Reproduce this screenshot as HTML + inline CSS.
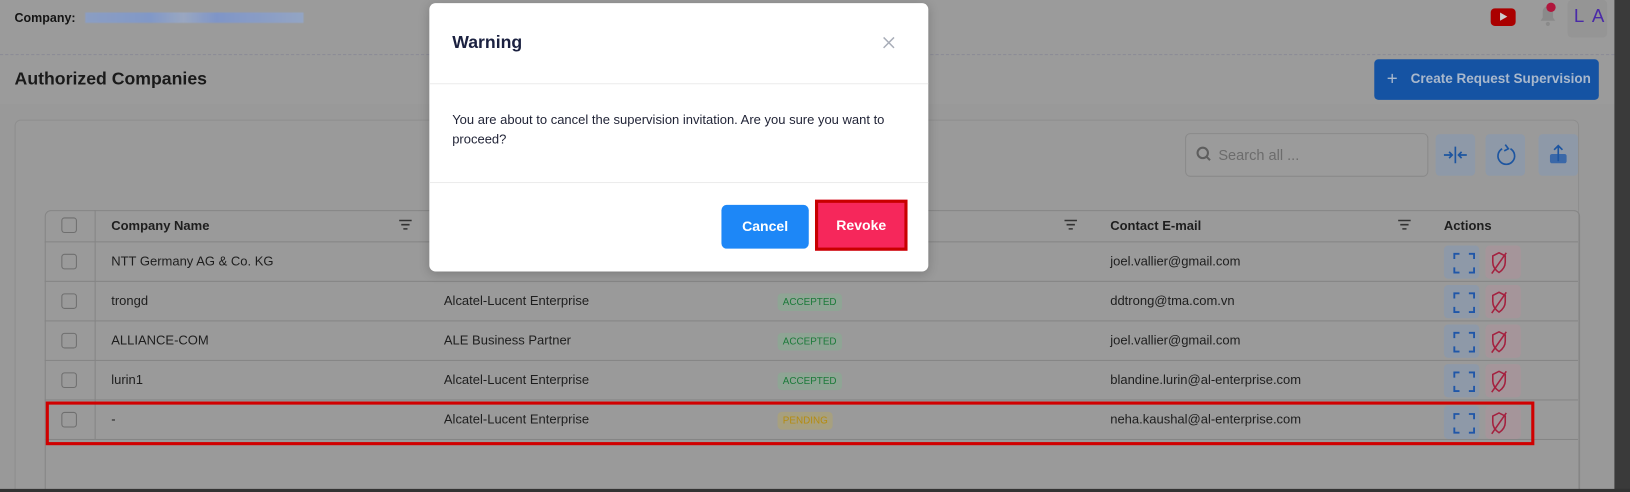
<!DOCTYPE html>
<html><head><meta charset="utf-8">
<style>
html,body{margin:0;padding:0;width:1630px;height:492px;overflow:hidden;background:#979797;font-family:"Liberation Sans",Arial,sans-serif;}
#w{position:absolute;left:0;top:0;width:1568px;height:473px;transform:scale(1.03954,1.0402);transform-origin:0 0;background:#999;overflow:hidden;}
.a{position:absolute;}
.t{position:absolute;font-size:12.5px;color:#1e1e1e;white-space:nowrap;}
.cb{position:absolute;width:13px;height:13px;border:1px solid #6f6f6f;border-radius:3px;left:59px;}
.badge{position:absolute;font-size:9.5px;padding:3px 5px;border-radius:4px;left:748px;}
.acc{background:#8fa595;color:#1c7a3a;}
.pen{background:#a7a07f;color:#b58c10;}
.ib{position:absolute;width:34px;height:32px;border-radius:4px;}
.blue{background:#8e99a8;left:1389px;}
.red{background:#a5959a;left:1429px;}
.hl{position:absolute;left:43px;right:0;height:1px;background:#858585;}
</style></head><body>
<div id="w">
 <div class="a" style="left:0;top:0;width:1553px;height:100px;background:#9b9b9b;"></div>
 <div class="a" style="left:0;top:52px;width:1553px;border-top:1px dashed #8a8a95;"></div>
 <div class="t" style="left:14px;top:10px;font-weight:bold;font-size:12px;color:#141414;">Company:</div>
 <div class="a" style="left:82px;top:12px;width:210px;height:10px;background:linear-gradient(90deg,#8a9fc8 0,#7f98cc 30%,#9aa9c6 45%,#7d95cc 60%,#93a6c9 100%);filter:blur(0.6px);opacity:.9"></div>
 <div class="a" style="left:1434px;top:8px;width:24px;height:17px;background:#a00;border-radius:4px;"></div>
 <div class="a" style="left:1443px;top:12px;width:0;height:0;border-left:7px solid #ccc;border-top:4.5px solid transparent;border-bottom:4.5px solid transparent;"></div>
 <svg class="a" style="left:1478px;top:2px" width="22" height="24"><path d="M4 18h14l-2-3v-6a5 5 0 0 0-10 0v6z" fill="#8a8a8a"/><circle cx="11" cy="21" r="2" fill="#8a8a8a"/><circle cx="14" cy="5" r="4.5" fill="#b0163c"/></svg>
 <div class="a" style="left:1508px;top:0;width:38px;height:36px;background:#959595;border-radius:4px;"></div>
 <div class="t" style="left:1514px;top:5px;font-size:18px;color:#4a2aa8;letter-spacing:2px;">L A</div>
 <div class="t" style="left:14px;top:66px;font-size:17px;font-weight:bold;color:#1a1a1a;">Authorized Companies</div>
 <div class="a" style="left:1322px;top:57px;width:216px;height:39px;background:#1553a3;border-radius:4px;"></div>
 <div class="t" style="left:1334px;top:65px;font-size:18px;color:#a9b8cc;">+</div>
 <div class="t" style="left:1357px;top:68px;font-size:13px;font-weight:bold;color:#a9b8cc;">Create Request Supervision</div>
 <div class="a" style="left:14px;top:115px;width:1503px;height:360px;background:#9a9a9a;border:1px solid #8e8e8e;border-radius:6px;"></div>
 <div class="a" style="left:1140px;top:128px;width:232px;height:40px;border:1px solid #8a8a8a;border-radius:5px;background:#9b9b9b;"></div>
 <svg class="a" style="left:1150px;top:140px" width="16" height="16"><circle cx="7" cy="7" r="5" stroke="#5e5e5e" stroke-width="2" fill="none"/><path d="M11 11l3 3" stroke="#5e5e5e" stroke-width="2"/></svg>
 <div class="t" style="left:1172px;top:141px;font-size:14px;color:#6c6c6c;">Search all ...</div>
 <div class="a" style="left:1381px;top:129px;width:38px;height:40px;background:#8e99a8;border-radius:4px;"></div>
 <div class="a" style="left:1429px;top:129px;width:38px;height:40px;background:#8e99a8;border-radius:4px;"></div>
 <div class="a" style="left:1480px;top:129px;width:38px;height:40px;background:#8e99a8;border-radius:4px;"></div>
 <svg class="a" style="left:1381px;top:129px" width="38" height="40"><g stroke="#1d55a0" stroke-width="1.6" fill="none"><path d="M19 12v16M8 20h8M13 17l3 3-3 3M30 20h-8M25 17l-3 3 3 3"/></g></svg>
 <svg class="a" style="left:1429px;top:129px" width="38" height="40"><g stroke="#1d55a0" stroke-width="1.6" fill="none"><path d="M24 14a8 8 0 1 1-8 0"/><path d="M19 10l3 4-4 2"/></g></svg>
 <svg class="a" style="left:1480px;top:129px" width="38" height="40"><rect x="11" y="19" width="16" height="9" rx="2" fill="#3a68a8"/><path d="M19 26V11M15 15l4-4 4 4" stroke="#1d55a0" stroke-width="1.6" fill="none"/></svg>
 <div class="a" style="left:43px;top:202px;width:1475px;height:280px;border:1px solid #858585;border-radius:6px;"></div>
 <div class="a" style="left:91px;top:202px;width:1px;height:220px;background:#858585;"></div>
 <div class="hl" style="top:232px;width:1475px"></div>
 <div class="hl" style="top:270px;width:1475px"></div>
 <div class="hl" style="top:308px;width:1475px"></div>
 <div class="hl" style="top:346px;width:1475px"></div>
 <div class="hl" style="top:384px;width:1475px"></div>
 <div class="hl" style="top:422px;width:1475px"></div>
 <div class="cb" style="top:209px"></div>
 <div class="t" style="left:107px;top:210px;font-weight:bold;">Company Name</div>
 <div class="t" style="left:1068px;top:210px;font-weight:bold;">Contact E-mail</div>
 <div class="t" style="left:1389px;top:210px;font-weight:bold;">Actions</div>
 <svg class="a" style="left:383px;top:210px" width="14" height="12"><path d="M1 2h12M3 6h8M5 10h4" stroke="#333" stroke-width="1.5"/></svg>
 <svg class="a" style="left:1023px;top:210px" width="14" height="12"><path d="M1 2h12M3 6h8M5 10h4" stroke="#333" stroke-width="1.5"/></svg>
 <svg class="a" style="left:1344px;top:210px" width="14" height="12"><path d="M1 2h12M3 6h8M5 10h4" stroke="#333" stroke-width="1.5"/></svg>

 <div class="cb" style="top:244px"></div><div class="t" style="left:107px;top:244px">NTT Germany AG &amp; Co. KG</div>
 <div class="t" style="left:1068px;top:244px">joel.vallier@gmail.com</div>
 <div class="cb" style="top:282px"></div><div class="t" style="left:107px;top:282px">trongd</div>
 <div class="t" style="left:427px;top:282px">Alcatel-Lucent Enterprise</div>
 <div class="badge acc" style="top:282px">ACCEPTED</div>
 <div class="t" style="left:1068px;top:282px">ddtrong@tma.com.vn</div>
 <div class="cb" style="top:320px"></div><div class="t" style="left:107px;top:320px">ALLIANCE-COM</div>
 <div class="t" style="left:427px;top:320px">ALE Business Partner</div>
 <div class="badge acc" style="top:320px">ACCEPTED</div>
 <div class="t" style="left:1068px;top:320px">joel.vallier@gmail.com</div>
 <div class="cb" style="top:358px"></div><div class="t" style="left:107px;top:358px">lurin1</div>
 <div class="t" style="left:427px;top:358px">Alcatel-Lucent Enterprise</div>
 <div class="badge acc" style="top:358px">ACCEPTED</div>
 <div class="t" style="left:1068px;top:358px">blandine.lurin@al-enterprise.com</div>
 <div class="cb" style="top:396px"></div><div class="t" style="left:107px;top:396px">-</div>
 <div class="t" style="left:427px;top:396px">Alcatel-Lucent Enterprise</div>
 <div class="badge pen" style="top:396px">PENDING</div>
 <div class="t" style="left:1068px;top:396px">neha.kaushal@al-enterprise.com</div>

 <div class="ib blue" style="top:236px"></div><div class="ib red" style="top:236px"></div>
 <div class="ib blue" style="top:274px"></div><div class="ib red" style="top:274px"></div>
 <div class="ib blue" style="top:312px"></div><div class="ib red" style="top:312px"></div>
 <div class="ib blue" style="top:350px"></div><div class="ib red" style="top:350px"></div>
 <div class="ib blue" style="top:390px"></div><div class="ib red" style="top:390px"></div>
 <svg class="a" style="left:1389px;top:236px" width="80" height="190">
  <defs><g id="ic"><path d="M10 13v-5h5M24 8h5v5M10 21v5h5M24 26h5v-5" stroke="#1f56a8" stroke-width="1.8" fill="none"/><g stroke="#a4213f" stroke-width="1.5" fill="none"><path d="M47 10l6-3 6 3v6c0 5-3 8-6 10-3-2-6-5-6-10z"/><path d="M46 27l14-20"/></g></g></defs>
  <use href="#ic"/><use href="#ic" y="38"/><use href="#ic" y="76"/><use href="#ic" y="114"/><use href="#ic" y="154"/>
 </svg>
 <div class="a" style="left:44px;top:386px;width:1426px;height:36px;border:3px solid #d00000;"></div>
 <div class="a" style="left:1553px;top:0;width:15px;height:473px;background:#3a3a3a;"></div>
 <div class="a" style="left:0;top:470px;width:1568px;height:3px;background:#333;"></div>
 <div class="a" style="left:413px;top:3px;width:480px;height:258px;background:#fff;border-radius:6px;box-shadow:0 2px 10px rgba(0,0,0,.2);"></div>
 <div class="t" style="left:435px;top:31px;font-size:17px;font-weight:bold;color:#1b2140;">Warning</div>
 <svg class="a" style="left:848px;top:34px" width="14" height="14"><path d="M2 2l10 10M12 2L2 12" stroke="#a8adb8" stroke-width="1.4"/></svg>
 <div class="a" style="left:413px;top:80px;width:480px;height:1px;background:#ececec;"></div>
 <div class="t" style="left:435px;top:106px;font-size:12.5px;color:#1f2235;line-height:19px;white-space:normal;width:440px;">You are about to cancel the supervision invitation. Are you sure you want to proceed?</div>
 <div class="a" style="left:413px;top:175px;width:480px;height:1px;background:#ececec;"></div>
 <div class="a" style="left:694px;top:197px;width:84px;height:42px;background:#1d87f7;border-radius:5px;color:#fff;font-weight:bold;font-size:13.5px;text-align:center;line-height:42px;">Cancel</div>
 <div class="a" style="left:784px;top:192px;width:83px;height:43px;background:#f6275b;border:3px solid #c80000;color:#fff;font-weight:bold;font-size:13.5px;text-align:center;line-height:43px;">Revoke</div>
</div>
</body></html>
